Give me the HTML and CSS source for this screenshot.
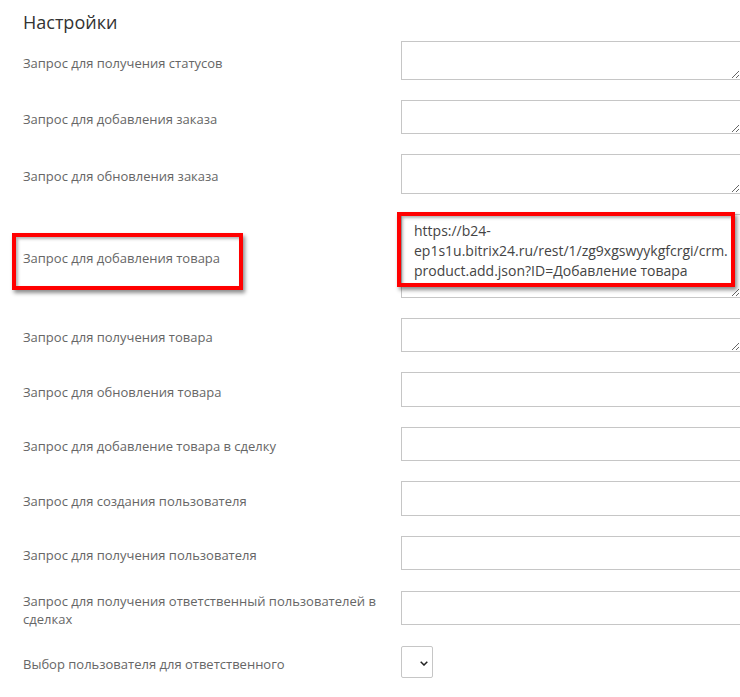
FILE: index.html
```html
<!DOCTYPE html>
<html lang="ru">
<head>
    <meta charset="UTF-8">
    <meta name="viewport" content="width=device-width, initial-scale=1.0">
    <title>Настройки</title>
    <link rel="stylesheet" href="styles.css">
</head>
<body>

<div class="settings">
    <h3 class="settings-title">Настройки</h3>

    <div class="form-row">
        <label class="form-label">Запрос для получения статусов</label>
        <textarea class="form-control h-39"></textarea>
    </div>

    <div class="form-row">
        <label class="form-label">Запрос для добавления заказа</label>
        <textarea class="form-control"></textarea>
    </div>

    <div class="form-row">
        <label class="form-label">Запрос для обновления заказа</label>
        <textarea class="form-control h-40"></textarea>
    </div>

    <div class="form-row">
        <label class="form-label">Запрос для добавления товара</label>
        <textarea class="form-control h-84">https://b24-ep1s1u.bitrix24.ru/rest/1/zg9xgswyykgfcrgi/crm.product.add.json?ID=Добавление товара</textarea>
        <!-- annotation boxes from the screenshot -->
        <div class="highlight highlight-label"></div>
        <div class="highlight highlight-field"></div>
    </div>

    <div class="form-row">
        <label class="form-label">Запрос для получения товара</label>
        <textarea class="form-control"></textarea>
    </div>

    <div class="form-row">
        <label class="form-label">Запрос для обновления товара</label>
        <input type="text" class="form-control h-35">
    </div>

    <div class="form-row">
        <label class="form-label">Запрос для добавление товара в сделку</label>
        <input type="text" class="form-control">
    </div>

    <div class="form-row">
        <label class="form-label">Запрос для создания пользователя</label>
        <input type="text" class="form-control h-35">
    </div>

    <div class="form-row">
        <label class="form-label">Запрос для получения пользователя</label>
        <input type="text" class="form-control">
    </div>

    <div class="form-row">
        <label class="form-label">Запрос для получения ответственный пользователей в сделках</label>
        <input type="text" class="form-control">
    </div>

    <div class="form-row">
        <label class="form-label">Выбор пользователя для ответственного</label>
        <div class="select-wrap">
            <select class="select-control">
                <option></option>
            </select>
            <svg class="select-arrow" width="8" height="5" viewBox="0 0 8 5">
                <path d="M0.7 0.7 L4 4 L7.3 0.7" fill="none" stroke="#222" stroke-width="1.5"/>
            </svg>
        </div>
    </div>
</div>

</body>
</html>
```

FILE: styles.css
```css
html, body {
    margin: 0;
    padding: 0;
    overflow: hidden;
    background: #fff;
}

body {
    font-family: "Open Sans", "Noto Sans", sans-serif;
}

.settings {
    width: 718px;
    padding: 12px 0 0 23px;
}

.settings-title {
    margin: 0 0 9px;
    font-size: 18px;
    line-height: 20px;
    font-weight: 400;
    color: #333;
}

.form-row {
    position: relative;
    display: grid;
    grid-template-columns: 363px 340px;
    column-gap: 15px;
    align-items: center;
    margin-bottom: 20px;
}

.form-label {
    margin: 2px 0 -2px;
    font-size: 13px;
    line-height: 18px;
    color: #666;
}

.form-control {
    display: block;
    box-sizing: border-box;
    width: 340px;
    height: 34px;
    margin: 0;
    padding: 6px 12px;
    border: 1px solid #c6c6c6;
    border-radius: 0;
    background: #fff;
    font-family: "Open Sans", "Noto Sans", sans-serif;
    font-size: 14px;
    line-height: 20px;
    color: #444;
    outline: none;
}

.h-35 { height: 35px; }
.h-39 { height: 39px; }
.h-40 { height: 40px; }
.h-84 { height: 84px; }

.select-wrap {
    position: relative;
    width: 32px;
    height: 32px;
}

.select-control {
    appearance: none;
    -webkit-appearance: none;
    box-sizing: border-box;
    width: 32px;
    height: 32px;
    margin: 0;
    border: 1px solid #c6c6c6;
    border-radius: 2px;
    background: #fff;
}

.select-arrow {
    position: absolute;
    left: 19px;
    top: 15px;
    pointer-events: none;
}

.highlight {
    position: absolute;
    box-sizing: border-box;
    border: 4px solid #f00;
    box-shadow: 2px 3px 4px rgba(0, 0, 0, 0.45), inset 2px 2px 3px rgba(0, 0, 0, 0.3);
    pointer-events: none;
}

.highlight-label {
    left: -11px;
    top: 19px;
    width: 231px;
    height: 57px;
}

.highlight-field {
    left: 374px;
    top: -2px;
    width: 338px;
    height: 75px;
}
```
